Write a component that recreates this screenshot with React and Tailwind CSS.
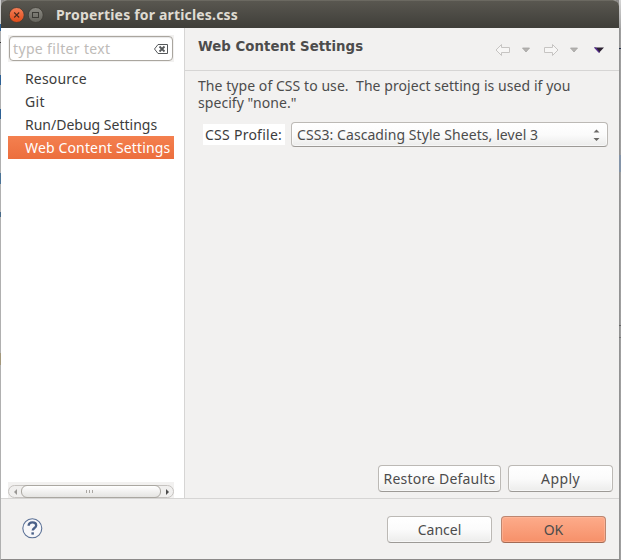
import React from "react";

function GtkButton({ className, children }) {
  return (
    <button
      className={
        "flex h-[27px] items-center justify-center whitespace-nowrap rounded-[4px] border text-[14px] leading-none text-[#4c4c4c] " +
        className
      }
    >
      {children}
    </button>
  );
}

const plain =
  "border-[#bcb9b5] border-b-[#9d9a96] bg-linear-to-b from-white via-[#fbfbfb] to-[#ececeb] shadow-[inset_0_0_0_1px_#ffffff90]";

function TitleBar() {
  return (
    <header className="flex h-7 shrink-0 items-center rounded-t-[6px] border-t border-[#6b6961] bg-linear-to-b from-[#595750] to-[#3f3e39] pl-2">
      <svg width="36" height="18" viewBox="0 0 36 18" className="shrink-0">
        <defs>
          <linearGradient id="close" x1="0" y1="0" x2="0" y2="1">
            <stop offset="0" stopColor="#f58059" />
            <stop offset="1" stopColor="#df4a17" />
          </linearGradient>
          <linearGradient id="max" x1="0" y1="0" x2="0" y2="1">
            <stop offset="0" stopColor="#8b8a83" />
            <stop offset="1" stopColor="#64635c" />
          </linearGradient>
        </defs>
        <circle cx="7.7" cy="9" r="7.5" fill="url(#close)" stroke="#3c3a34" strokeWidth=".8" />
        <path d="M5.200 6.500l5 5m0-5l-5 5" stroke="#4a2a1c" strokeWidth="1.1" />
        <circle cx="26.700" cy="9" r="7.500" fill="url(#max)" stroke="#3c3a34" strokeWidth=".8" />
        <rect x="23.500" y="6.500" width="6" height="5" fill="none" stroke="#3b3a35" />
      </svg>
      <h1 className="ml-[11px] whitespace-nowrap text-[14px] font-bold leading-none tracking-[0.18px] text-[#dfdbd2]">
        Properties for articles.css
      </h1>
    </header>
  );
}

function TreeItem({ label, className = "" }) {
  return (
    <li className={"flex h-[23px] items-center whitespace-nowrap pl-[17px] text-[14px] leading-none text-[#3c3c3c] " + className}>
      {label}
    </li>
  );
}

function Sidebar() {
  return (
    <aside className="flex w-[184px] shrink-0 flex-col border-r border-[#d6d5d4] bg-white pl-[7px] pr-[10px] pt-[7px]">
      <div className="h-[27px] w-[166px] bg-[#f2f1f0] p-px">
        <div className="flex h-[25px] items-center rounded-[4px] border border-[#aaa69f] bg-white pl-[3px] pr-1 shadow-[inset_0_1px_1px_#0000001a]">
          <span className="whitespace-nowrap text-[14px] leading-none tracking-[0.35px] text-[#bebbb8]">type filter text</span>
          <svg className="ml-auto" width="14" height="10" viewBox="0 0 14 10">
            <path d="M4 .5h9.500v9H4L.5 5z" fill="white" stroke="#55585a" />
            <path d="M5.500 2.500l5 5m0-5l-5 5" stroke="#55585a" strokeWidth="1.8" />
          </svg>
        </div>
      </div>
      <ul className="mt-[5px] w-[166px]">
        <TreeItem label="Resource" className="tracking-[0.15px]" />
        <TreeItem label="Git" className="tracking-[0.3px]" />
        <TreeItem label="Run/Debug Settings" />
        <TreeItem label="Web Content Settings" className="bg-linear-to-b from-[#f4804f] to-[#ec6e3d] tracking-[0.15px] text-white" />
      </ul>
      <div className="mt-auto flex h-4 w-[166px] items-end bg-[#f2f1f0]">
        <div className="flex h-[13px] w-full rounded-full border border-[#c6c3c0] bg-[#f0efee]">
          <div className="flex w-3 items-center justify-center pl-px">
            <svg width="3" height="6" viewBox="0 0 3 6"><path d="M3 0v6L0 3z" fill="#9a9895" /></svg>
          </div>
          <div className="-my-px flex w-[140px] items-center justify-center gap-[2px] rounded-[6px] border border-[#aaa7a1] bg-linear-to-b from-white to-[#e5e4e2] pr-[3px]">
            <i className="h-[3px] w-px bg-[#aaa7a3]" />
            <i className="h-[3px] w-px bg-[#aaa7a3]" />
            <i className="h-[3px] w-px bg-[#aaa7a3]" />
          </div>
          <div className="flex flex-1 items-center justify-center">
            <svg width="3" height="6" viewBox="0 0 3 6"><path d="M0 0v6l3-3z" fill="#4c4c4c" /></svg>
          </div>
        </div>
      </div>
    </aside>
  );
}

function NavTools() {
  return (
    <svg width="112" height="14" viewBox="0 0 112 14" fill="#f7f6f5">
      <path d="M1 7L6.500 1.500V4.500h8v5h-8v3z" stroke="#c6c4c2" />
      <path d="M27.500 5h7l-3.500 4z" fill="#b5b3b1" stroke="#a5a3a1" strokeWidth=".8" />
      <path d="M63 7L57.500 1.500V4.500h-8v5h8v3z" stroke="#c6c4c2" />
      <path d="M75.500 5h7l-3.500 4z" fill="#b5b3b1" stroke="#a5a3a1" strokeWidth=".8" />
      <path d="M99 4.500h10l-5 5.300z" fill="#2a2130" />
      <path d="M99 4.500h2l4 5.300h-1z" fill="#5a2a9c" />
    </svg>
  );
}

function SettingsPage() {
  return (
    <main className="flex min-w-0 flex-1 flex-col">
      <div className="flex h-[43px] shrink-0 items-center justify-between border-b border-[#d6d5d4] pb-1 pl-[13px] pr-[12px]">
        <h2 className="whitespace-nowrap font-['DejaVu_Sans',sans-serif] text-[13.3px] font-bold leading-none tracking-[0.04px] text-[#4c4c4c]">
          Web Content Settings
        </h2>
        <div className="mt-[5px]">
          <NavTools />
        </div>
      </div>
      <p className="whitespace-pre pl-[13px] pt-[6px] text-[14px] leading-[17px] tracking-[0.06px] text-[#4c4c4c]">
        {'The type of CSS to use.  The project setting is used if you\nspecify "none."'}
      </p>
      <div className="mt-[11px] flex items-center pl-[18px] text-[14px] leading-none text-[#4c4c4c]">
        <label className="flex h-[21px] w-[82px] items-center whitespace-nowrap bg-white pl-[2px] tracking-[0.26px] text-[#3c3c3c]">CSS Profile:</label>
        <div className={"ml-[6px] flex h-[25px] w-[317px] items-center rounded-[4px] border pl-[5px] pr-[7px] " + plain}>
          <span className="whitespace-nowrap tracking-[0.07px]">CSS3: Cascading Style Sheets, level 3</span>
          <svg className="ml-auto mt-px" width="7" height="12" viewBox="0 0 7 12">
            <path d="M.5 3.500h6l-3-3zM.5 9h6l-3 3z" fill="#6a6866" />
          </svg>
        </div>
      </div>
      <div className="mb-[6px] mt-auto flex justify-end gap-[7px] pr-[6px]">
        <GtkButton className={"w-[123px] tracking-[0.2px] " + plain}>Restore Defaults</GtkButton>
        <GtkButton className={"w-[105px] tracking-[0.4px] " + plain}>Apply</GtkButton>
      </div>
    </main>
  );
}

function Footer() {
  return (
    <footer className="flex h-[61px] shrink-0 items-start border-t border-[#d6d5d4] pl-[21px] pr-[13px] pt-[17px]">
      <svg className="mt-[2px]" width="21" height="21" viewBox="0 0 21 21" fill="none">
        <circle cx="10.300" cy="10.300" r="9.500" fill="#f7f7f9" stroke="#5b7196" strokeWidth="1.100" />
        <path d="M6.600 7.800C6.700 5.500 8.200 4.400 10.500 4.400s3.700 1.200 3.700 3c0 2.600-3.500 2.600-3.500 5.200" stroke="#4a6088" strokeWidth="2.300" />
        <path d="M9.400 14.300h2.500v2.300H9.400z" fill="#4a6088" />
      </svg>
      <div className="ml-auto flex gap-[9px]">
        <GtkButton className={"w-[105px] " + plain}>Cancel</GtkButton>
        <GtkButton className="w-[105px] border-[#bd8670] border-b-[#a36a54] bg-linear-to-b from-[#fdab8a] to-[#f69069] shadow-[inset_0_0_0_1px_#ffc0a680]">
          OK
        </GtkButton>
      </div>
    </footer>
  );
}

// Slivers of the windows behind the dialog, visible along its two sides.
function LeftEdge() {
  return (
    <div className="flex w-px shrink-0 flex-col bg-[#b0b0b0]">
      <i className="h-6 bg-[#d0d0d0]" />
      <i className="h-[7px] bg-[#2d6094]" />
      <i className="mt-[11px] h-px bg-[#333]" />
      <i className="mt-[32px] h-[10px] bg-[#2d6094]" />
      <i className="mt-[24px] h-[10px] bg-[#2d6094]" />
      <i className="mt-[54px] h-[11px] bg-[#4a7396]" />
      <i className="mt-[28px] h-[5px] bg-[#476a88]" />
      <i className="mt-[136px] h-[12px] bg-[#a3987b]" />
    </div>
  );
}

function RightEdge() {
  return (
    <div className="flex w-[2px] shrink-0 flex-col bg-linear-to-r from-[#8c8c8c] to-[#a6a6a6]">
      <i className="h-7 bg-linear-to-b from-[#d5d5d5] to-[#a5a5a5]" />
      <i className="mt-[20px] h-px bg-[#25304a]" />
      <i className="mt-[106px] h-[17px] bg-[#8494a8]" />
      <i className="mt-[153px] h-px bg-[#666]" />
      <i className="mt-[11px] h-px bg-[#777]" />
    </div>
  );
}

export default function App() {
  return (
    <div className="flex h-[560px] w-[621px] overflow-hidden bg-[#8b8988] font-['Noto_Sans',sans-serif]">
      <LeftEdge />
      <div className="flex h-[559px] w-[618px] flex-col rounded-t-[6px] bg-[#f2f1f0]">
        <TitleBar />
        <div className="flex min-h-0 flex-1">
          <Sidebar />
          <SettingsPage />
        </div>
        <Footer />
      </div>
      <RightEdge />
    </div>
  );
}
